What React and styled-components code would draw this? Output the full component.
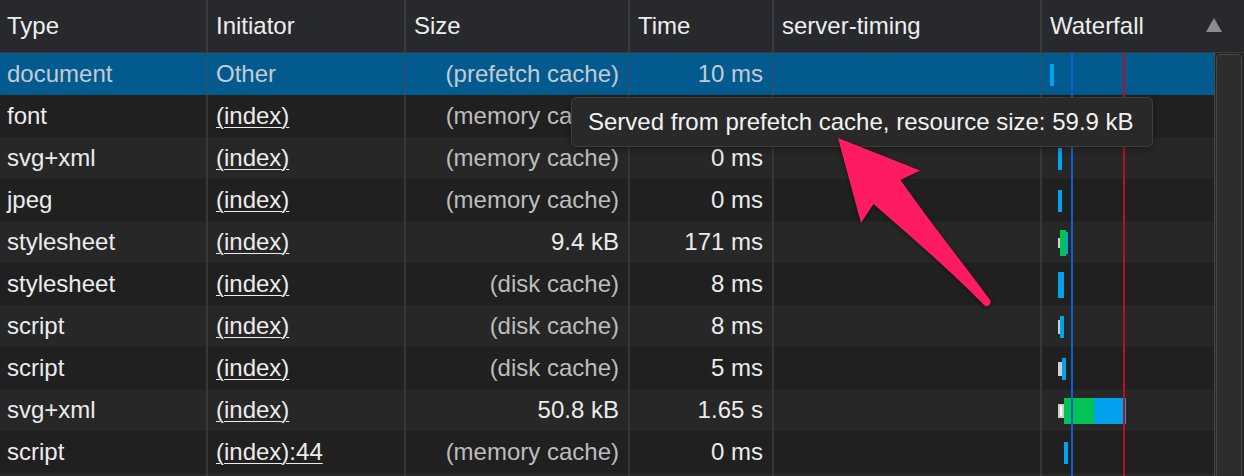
import React from "react";
import styled, { createGlobalStyle } from "styled-components";

const Global = createGlobalStyle`
  html, body { margin: 0; padding: 0; background: #202020; overflow: hidden; }
  #root { width: 1244px; height: 476px; overflow: hidden; position: relative; }
  * { box-sizing: border-box; }
`;

const COLS = "208px 198px 224px 144px 268px 1fr";

const Page = styled.div`
  width: 1244px;
  height: 476px;
  display: flex;
  flex-direction: column;
  font-family: "Liberation Sans", Arial, sans-serif;
  font-size: 24px;
  color: #e3e3e3;
  position: relative;
  overflow: hidden;
`;

const Header = styled.div`
  display: grid;
  grid-template-columns: ${COLS};
  height: 53px;
  background: #28292c;
  border-bottom: 1px solid #3b3b3d;
  flex: none;
`;

const HeadCell = styled.div`
  display: flex;
  align-items: center;
  justify-content: space-between;
  padding: 0 8px 0 ${(p) => (p.$first ? 7 : 8)}px;
  border-right: ${(p) => (p.$last ? "none" : "2px solid #3b3b3d")};
  color: #eeeeee;
  white-space: nowrap;
`;

const SortUp = styled.span`
  width: 0;
  height: 0;
  border-left: 8px solid transparent;
  border-right: 8px solid transparent;
  border-bottom: 14px solid #8c8c8c;
  margin-right: 14px;
  margin-top: -2px;
`;

const Body = styled.div`
  display: flex;
  flex: 1;
  min-height: 0;
`;

const Table = styled.div`
  width: 1214px;
  position: relative;
  display: flex;
  flex-direction: column;
`;

const Row = styled.div`
  display: grid;
  grid-template-columns: 208px 198px 224px 144px 268px 168px;
  height: 42px;
  flex: none;
  background: ${(p) => (p.$selected ? "#035a8e" : p.$odd ? "#202020" : "#272727")};
  color: ${(p) => (p.$selected ? "#c3cbd3" : "#ececec")};
`;

const Cell = styled.div`
  display: flex;
  align-items: center;
  justify-content: ${(p) => (p.$right ? "flex-end" : "flex-start")};
  padding: 0 ${(p) => (p.$right ? 9 : 8)}px 0 ${(p) => (p.$first ? 7 : 8)}px;
  border-right: 2px solid ${(p) => (p.$selected ? "#1d5477" : "#363636")};
  white-space: nowrap;
  overflow: hidden;
  color: ${(p) => (p.$dim ? (p.$selected ? "#c3cbd3" : "#bdbdbd") : "inherit")};
`;

const Link = styled.span`
  text-decoration: underline;
  text-underline-offset: 3px;
  text-decoration-thickness: 1px;
`;

const WaterCell = styled.div`
  position: relative;
  overflow: hidden;
`;

const Bar = styled.div`
  position: absolute;
  background: ${(p) => p.$c};
  border: ${(p) => (p.$box ? "2px solid #cfcfcf" : "none")};
`;

const VLine = styled.div`
  position: absolute;
  top: 0;
  bottom: 0;
  width: 2px;
  background: ${(p) => p.$c};
  pointer-events: none;
`;

const Scroll = styled.div`
  width: 30px;
  flex: none;
  background: #262626;
  border-left: 1px solid #4a4a4a;
  padding: 1px 2px 0 1px;
`;

const Thumb = styled.div`
  height: 100%;
  border: 1px solid #474747;
  border-bottom: none;
  border-radius: 5px 5px 0 0;
  background: #2d2d2d;
`;

const Tooltip = styled.div`
  position: absolute;
  left: 571px;
  top: 97px;
  width: 582px;
  height: 50px;
  background: #292929;
  border: 1px solid #3e3e3e;
  border-radius: 5px;
  box-shadow: 0 2px 6px rgba(0, 0, 0, 0.35);
  display: flex;
  align-items: center;
  padding-left: 16px;
  color: #f2f2f2;
  white-space: nowrap;
`;

const ArrowSvg = styled.svg`
  position: absolute;
  left: 0;
  top: 0;
  pointer-events: none;
  filter: drop-shadow(0 1px 2px rgba(0, 0, 0, 0.5));
`;

const BLUE = "#03a2ef";
const GREEN = "#00c455";
const GRAY = "#ffffff";

const rows = [
  { type: "document", init: "Other", link: false, size: "(prefetch cache)", dim: true, time: "10 ms", bars: [[8, 11, 4, 22, BLUE]] },
  { type: "font", init: "(index)", link: true, size: "(memory cache)", dim: true, time: "0 ms", bars: [[16, 11, 4, 22, BLUE]] },
  { type: "svg+xml", init: "(index)", link: true, size: "(memory cache)", dim: true, time: "0 ms", bars: [[16, 11, 4, 22, BLUE]] },
  { type: "jpeg", init: "(index)", link: true, size: "(memory cache)", dim: true, time: "0 ms", bars: [[16, 11, 4, 22, BLUE]] },
  { type: "stylesheet", init: "(index)", link: true, size: "9.4 kB", dim: false, time: "171 ms", bars: [[16, 17, 2, 10, "#cfcfcf"], [24, 11, 2, 22, BLUE], [18, 9, 6, 26, GREEN]] },
  { type: "stylesheet", init: "(index)", link: true, size: "(disk cache)", dim: true, time: "8 ms", bars: [[16, 9, 6, 26, BLUE]] },
  { type: "script", init: "(index)", link: true, size: "(disk cache)", dim: true, time: "8 ms", bars: [[16, 15, 2, 14, "#cfcfcf"], [18, 11, 4, 22, BLUE]] },
  { type: "script", init: "(index)", link: true, size: "(disk cache)", dim: true, time: "5 ms", bars: [[16, 15, 4, 14, GRAY, true], [20, 11, 4, 22, BLUE]] },
  { type: "svg+xml", init: "(index)", link: true, size: "50.8 kB", dim: false, time: "1.65 s", bars: [[16, 15, 6, 14, GRAY, true], [22, 9, 30, 26, GREEN], [52, 9, 29, 26, BLUE], [83, 9, 1, 26, BLUE]] },
  { type: "script", init: "(index):44", link: true, size: "(memory cache)", dim: true, time: "0 ms", bars: [[22, 11, 4, 22, BLUE]] },
  { type: "", init: "", link: false, size: "", dim: true, time: "", bars: [] },
];

export default function App() {
  return (
    <Page>
      <Global />
      <Header>
        <HeadCell $first>Type</HeadCell>
        <HeadCell>Initiator</HeadCell>
        <HeadCell>Size</HeadCell>
        <HeadCell>Time</HeadCell>
        <HeadCell>server-timing</HeadCell>
        <HeadCell $last>
          Waterfall
          <SortUp />
        </HeadCell>
      </Header>
      <Body>
        <Table>
          {rows.map((r, i) => {
            const sel = i === 0;
            return (
              <Row key={i} $selected={sel} $odd={i % 2 === 1}>
                <Cell $first $selected={sel}>{r.type}</Cell>
                <Cell $selected={sel}>{r.link ? <Link>{r.init}</Link> : r.init}</Cell>
                <Cell $right $dim={r.dim} $selected={sel}>{r.size}</Cell>
                <Cell $right $selected={sel}>{r.time}</Cell>
                <Cell $selected={sel} />
                <WaterCell>
                  {r.bars.map(([l, t, w, h, c, box], j) => (
                    <Bar key={j} $c={c} $box={box} style={{ left: l, top: t, width: w, height: h }} />
                  ))}
                </WaterCell>
              </Row>
            );
          })}
          <VLine $c="#0b62cc" style={{ left: 1071 }} />
          <VLine $c="#b8101f" style={{ left: 1123 }} />
        </Table>
        <Scroll>
          <Thumb />
        </Scroll>
      </Body>
      <Tooltip>Served from prefetch cache, resource size: 59.9 kB</Tooltip>
      <ArrowSvg width="1244" height="476" viewBox="0 0 1244 476">
        <path
          d="M838 138 L920 170.5 L900.5 180 C 930 222, 962 262, 990 300 C 992.5 304, 987 308.5, 984 305 C 950 270, 910 236, 873.5 204 L861 223 Z"
          fill="#fe1b62"
        />
      </ArrowSvg>
    </Page>
  );
}
